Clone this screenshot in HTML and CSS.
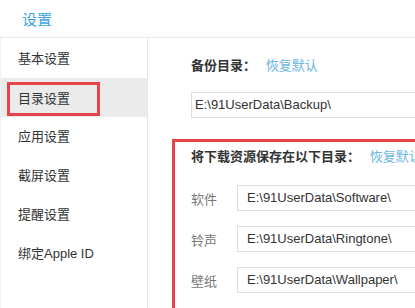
FILE: index.html
```html
<!DOCTYPE html>
<html lang="zh-CN">
<head>
    <meta charset="UTF-8">
    <meta name="viewport" content="width=device-width, initial-scale=1.0">
    <title>设置</title>
    <link rel="stylesheet" href="styles.css">
</head>
<body>
<!-- Title bar -->
<div class="header">设置</div>

<div class="main">
    <!-- Left menu -->
    <ul class="menu">
        <li>基本设置</li>
        <li class="active"><span class="mark">目录设置</span></li>
        <li>应用设置</li>
        <li>截屏设置</li>
        <li>提醒设置</li>
        <li>绑定Apple ID</li>
    </ul>

    <!-- Directory settings -->
    <div class="content">
        <div class="title">备份目录： <a class="reset">恢复默认</a></div>
        <div class="path wide">E:\91UserData\Backup\</div>

        <div class="group">
            <div class="title">将下载资源保存在以下目录： <a class="reset">恢复默认</a></div>
            <div class="row">
                <span class="label">软件</span>
                <div class="path">E:\91UserData\Software\</div>
            </div>
            <div class="row">
                <span class="label">铃声</span>
                <div class="path">E:\91UserData\Ringtone\</div>
            </div>
            <div class="row">
                <span class="label">壁纸</span>
                <div class="path">E:\91UserData\Wallpaper\</div>
            </div>
        </div>
    </div>
</div>
</body>
</html>
```

FILE: styles.css
```css
body {
    font-family: "Liberation Sans", "Noto Sans CJK SC", sans-serif;
    font-size: 13px;
    color: #333;
    margin: 0;
    background: #fff;
    width: 415px;
    height: 308px;
    overflow: hidden;
}
.header {
    height: 34px;
    padding: 3px 0 0 22px;
    line-height: 34px;
    font-size: 15px;
    color: #3ba4e0;
    border-bottom: 1px solid #e8e8e8;
}
.main {
    display: flex;
    height: 270px;
}
.menu {
    list-style: none;
    margin: 0;
    padding: 1px 0 0 0;
    width: 148px;
    flex-shrink: 0;
    border-right: 1px solid #e8e8e8;
    border-left: 1px solid #f0f0f0;
    box-sizing: border-box;
}
.menu li {
    height: 39px;
    line-height: 39px;
    padding-left: 17px;
}
.menu li.active {
    background: #ebebeb;
}
.mark {
    display: inline-block;
    line-height: 28px;
    padding: 0 27px 0 8px;
    margin-left: -11px;
    border: 3px solid #e8434b;
    vertical-align: middle;
}
.content {
    padding: 18px 0 0 43px;
    width: 400px;
    flex-shrink: 0;
}
.title {
    font-weight: bold;
    line-height: 20px;
}
.reset {
    font-weight: normal;
    color: #6cb6e2;
    margin-left: 6px;
}
.path {
    height: 24px;
    line-height: 24px;
    border: 1px solid #dedede;
    padding-left: 9px;
    width: 300px;
}
.path.wide {
    margin-top: 16px;
    padding-left: 3px;
}
.group {
    margin: 21px 0 0 -19px;
    border: 3px solid #e8434b;
    padding: 5px 0 15px 16px;
}
.group .title {
    margin-bottom: 18px;
}
.row {
    display: flex;
    align-items: center;
    margin-top: 15px;
}
.row:first-of-type {
    margin-top: 0;
}
.label {
    width: 46px;
    color: #777;
}
```
